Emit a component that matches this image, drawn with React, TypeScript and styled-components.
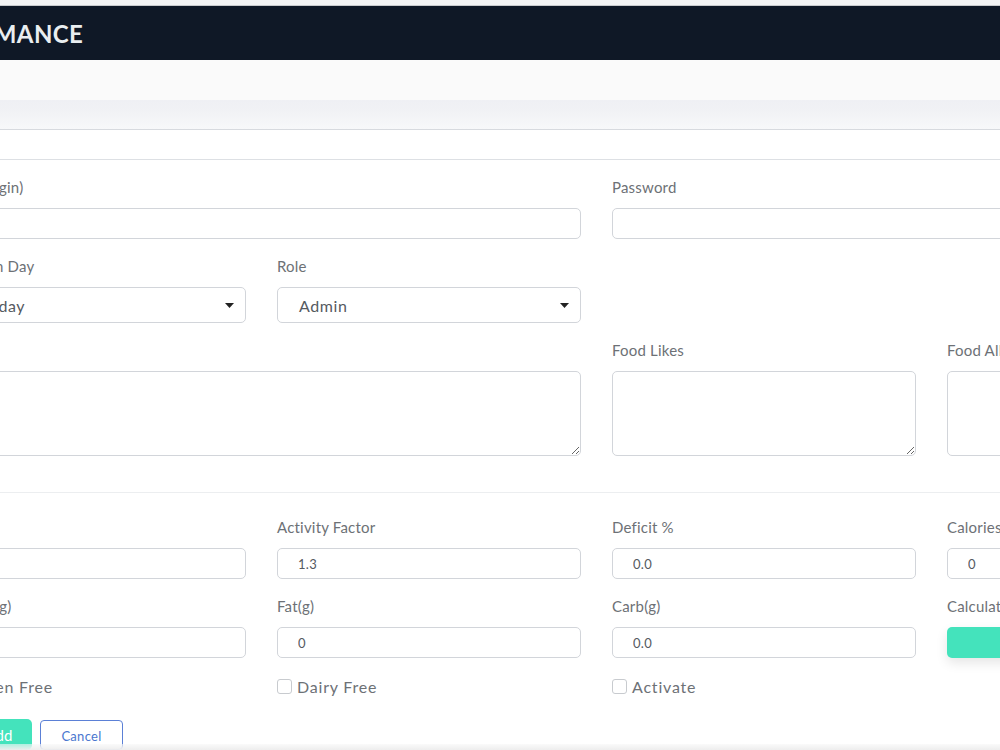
import React from "react";
import styled, { createGlobalStyle } from "styled-components";

const Global = createGlobalStyle`
  html, body { margin: 0; padding: 0; background: #ffffff; overflow: hidden; }
  body { font-family: Lato, "Open Sans", sans-serif; }
  * { box-sizing: border-box; }
`;

const Page = styled.div`
  margin-left: -88px;
  width: 1500px;
`;

const TopStrip = styled.div`
  height: 6px;
  background: #f3f4f4;
  border-bottom: 1px solid #c9cbcd;
`;

const Header = styled.header`
  height: 54px;
  background: #0f1826;
  display: flex;
  align-items: center;
`;

const Brand = styled.h1`
  margin: 0 0 0 -13px;
  font: 700 24px Lato, sans-serif;
  color: #e9eef0;
  letter-spacing: 0.4px;
`;

const SubBar = styled.div`
  height: 40px;
  background: #fafafa;
`;

const ShadowBand = styled.div`
  height: 30px;
  background: linear-gradient(#eff0f4, #f1f2f5 40%, #f7f8fa);
  border-bottom: 1px solid #d7dadf;
`;

const CardHead = styled.div`
  height: 30px;
  background: #ffffff;
  border-bottom: 1px solid #dde0e4;
`;

const FormBody = styled.div`
  padding: 16px 0 0 30px;
`;

const Grid = styled.div`
  display: grid;
  grid-template-columns: repeat(4, 304px);
  column-gap: 31px;
`;

const Field = styled.div<{ $span?: number }>`
  grid-column: span ${(p) => p.$span ?? 1};
  margin-bottom: 16px;
`;

const Label = styled.label`
  display: block;
  font-size: 15px;
  line-height: 22px;
  letter-spacing: 0.2px;
  margin-bottom: 10px;
  color: #6d7176;
`;

const Input = styled.input`
  display: block;
  width: 100%;
  height: 31px;
  border: 1px solid #d2d5da;
  border-radius: 5px;
  padding: 0 20px;
  font: 13px Lato, sans-serif;
  letter-spacing: 0.3px;
  color: #555a5f;
  background: #fff;
  outline: none;
`;

const SelectBox = styled.div`
  display: flex;
  align-items: center;
  justify-content: space-between;
  height: 36px;
  border: 1px solid #d2d5da;
  border-radius: 5px;
  padding: 0 11px 0 21px;
  font-size: 16px;
  letter-spacing: 0.6px;
  color: #555a5f;
  background: #fff;
`;

const TextArea = styled.textarea`
  display: block;
  width: 100%;
  height: 85px;
  border: 1px solid #d2d5da;
  border-radius: 5px;
  background: #fff;
  outline: none;
`;

const Divider = styled.hr`
  border: 0;
  height: 1px;
  background: #eceef0;
  margin: 20px 0 23px;
`;

const CheckRow = styled.label`
  display: flex;
  align-items: center;
  gap: 5px;
  height: 24px;
  font-size: 16px;
  letter-spacing: 0.8px;
  color: #6d7176;
`;

const Check = styled.input`
  appearance: none;
  margin: 0;
  width: 15px;
  height: 15px;
  border: 1px solid #c8cbcf;
  border-radius: 3px;
  background: #fff;
`;

const CalcButton = styled.button`
  width: 100%;
  height: 31px;
  border: 0;
  border-radius: 5px;
  background: #44e3bc;
  color: #fff;
  font: 14px Lato, sans-serif;
  box-shadow: 0 5px 12px rgba(0, 0, 0, 0.1);
`;

const Actions = styled.div`
  display: flex;
  gap: 8px;
  margin: 5px 0 0 24px;
`;

const PrimaryButton = styled.button`
  width: 66px;
  height: 31px;
  border: 0;
  border-radius: 5px;
  background: #44e3bc;
  color: #fff;
  font: 15px Lato, sans-serif;
`;

const OutlineButton = styled.button`
  width: 83px;
  height: 30px;
  margin-top: 1px;
  padding-top: 3px;
  border: 1px solid #5b80d6;
  border-radius: 4px;
  background: #fff;
  color: #4a77cf;
  font: 13px Lato, sans-serif;
  letter-spacing: 0.3px;
`;

const ScrollTrack = styled.div`
  position: fixed;
  left: 0;
  right: 0;
  bottom: 0;
  height: 6px;
  background: linear-gradient(rgba(248, 248, 248, 0.6), #eeeeee);
`;

const Caret = () => (
  <svg width="9" height="5" viewBox="0 0 9 5">
    <polygon points="0,0 9,0 4.5,5" fill="#222" />
  </svg>
);

const Select = ({ value }: { value: string }) => (
  <SelectBox>
    <span>{value}</span>
    <Caret />
  </SelectBox>
);

export default function App() {
  return (
    <>
      <Global />
      <Page>
        <TopStrip />
        <Header>
          <Brand>PERFORMANCE</Brand>
        </Header>
        <SubBar />
        <ShadowBand />
        <CardHead />
        <FormBody>
          <Grid>
            <Field $span={2}>
              <Label>Email (login)</Label>
              <Input />
            </Field>
            <Field $span={2}>
              <Label>Password</Label>
              <Input type="password" />
            </Field>
            <Field>
              <Label>Weigh-in Day</Label>
              <Select value="Monday" />
            </Field>
            <Field>
              <Label>Role</Label>
              <Select value="Admin" />
            </Field>
            <Field $span={2} />
            <Field $span={2}>
              <Label>Notes</Label>
              <TextArea />
            </Field>
            <Field>
              <Label>Food Likes</Label>
              <TextArea />
            </Field>
            <Field>
              <Label>Food Allergies</Label>
              <TextArea />
            </Field>
          </Grid>
          <Divider />
          <Grid>
            <Field>
              <Label>BMR</Label>
              <Input defaultValue="" />
            </Field>
            <Field>
              <Label>Activity Factor</Label>
              <Input defaultValue="1.3" />
            </Field>
            <Field>
              <Label>Deficit %</Label>
              <Input defaultValue="0.0" />
            </Field>
            <Field>
              <Label>Calories</Label>
              <Input defaultValue="0" />
            </Field>
            <Field>
              <Label>Protein (g)</Label>
              <Input defaultValue="" />
            </Field>
            <Field>
              <Label>Fat(g)</Label>
              <Input defaultValue="0" />
            </Field>
            <Field>
              <Label>Carb(g)</Label>
              <Input defaultValue="0.0" />
            </Field>
            <Field>
              <Label>Calculate</Label>
              <CalcButton>Calculate</CalcButton>
            </Field>
            <Field>
              <CheckRow>
                <Check type="checkbox" />
                Gluten Free
              </CheckRow>
            </Field>
            <Field>
              <CheckRow>
                <Check type="checkbox" />
                Dairy Free
              </CheckRow>
            </Field>
            <Field>
              <CheckRow>
                <Check type="checkbox" />
                Activate
              </CheckRow>
            </Field>
          </Grid>
          <Actions>
            <PrimaryButton>Add</PrimaryButton>
            <OutlineButton>Cancel</OutlineButton>
          </Actions>
        </FormBody>
      </Page>
      <ScrollTrack />
    </>
  );
}
